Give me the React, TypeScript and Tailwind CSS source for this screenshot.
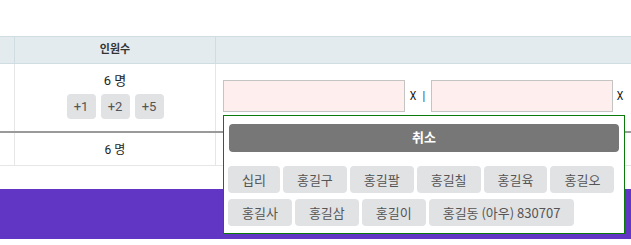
import React from "react";

const font = { fontFamily: 'Roboto, "Noto Sans CJK KR", sans-serif' };

const chips = ["십리", "홍길구", "홍길팔", "홍길칠", "홍길육", "홍길오", "홍길사", "홍길삼", "홍길이", "홍길동 (아우) 830707"];

export default function App() {
  return (
    <div className="relative w-[631px] h-[245px] overflow-hidden bg-white text-[#222]" style={font}>
      <div className="h-[36px]" />

      {/* header */}
      <div className="grid grid-cols-[15px_201px_1fr] h-[28px] bg-[#e3ebee] border-y border-[#cfdce1]">
        <div className="border-r border-[#cfdce1]" />
        <div className="border-r border-[#cfdce1] flex items-center justify-center text-[11px] font-bold text-[#333]">인원수</div>
        <div />
      </div>

      {/* row 1 */}
      <div className="grid grid-cols-[15px_201px_1fr] h-[67px]">
        <div className="border-r border-[#e6e6e6]" />
        <div className="border-r border-[#e6e6e6] flex flex-col items-center pt-[8px]">
          <div className="text-[13px] leading-[18px]">6 명</div>
          <div className="flex gap-[5px] mt-[4px]">
            {["+1", "+2", "+5"].map((b) => (
              <div key={b} className="w-[29px] h-[25px] rounded-[4px] bg-[#e1e2e4] flex items-center justify-center text-[13px] text-[#555]">{b}</div>
            ))}
          </div>
        </div>
        <div className="flex items-start pt-[16px] pl-[7px] text-[13px]">
          <div className="w-[182px] h-[32px] bg-[#feeeee] border border-[#c4c4c4]" />
          <span className="ml-[4px] leading-[32px] text-[#111] scale-x-[0.8]">X</span>
          <span className="ml-[5px] leading-[32px] text-[#3a5a9a]">|</span>
          <div className="ml-[6px] w-[182px] h-[32px] bg-[#feeeee] border border-[#c4c4c4]" />
          <span className="ml-[3px] leading-[32px] text-[#111] scale-x-[0.8]">X</span>
        </div>
      </div>

      <div className="h-[2px] bg-[#9a9a9a]" />

      {/* row 2 */}
      <div className="grid grid-cols-[15px_201px_1fr] h-[33px] border-b border-[#e6e6e6]">
        <div className="border-r border-[#e6e6e6]" />
        <div className="border-r border-[#e6e6e6] flex items-center justify-center text-[12px] pt-[2px]">6 명</div>
        <div />
      </div>

      <div className="h-[23px]" />
      <div className="h-[50px] bg-[#6236c5] flex justify-end items-center text-white text-[14px]">
        <span className="mr-[-5px]">[</span>
      </div>

      {/* dropdown */}
      <div className="absolute left-[223px] top-[115px] w-[402px] h-[119px] bg-white border border-[#0a7a0a] px-[4px] pt-[8px]">
        <div className="mx-[1px] h-[28px] rounded-[4px] bg-[#777777] flex items-center justify-center text-white font-bold text-[13px]">취소</div>
        <div className="flex flex-wrap gap-x-[3px] gap-y-[6px] mt-[14px]">
          {chips.map((c) => (
            <div key={c} className="h-[27px] rounded-[4px] bg-[#e1e2e4] px-[14px] flex items-center text-[13px] text-[#555]" style={{ fontFamily: '"Noto Sans CJK KR", sans-serif' }}>{c}</div>
          ))}
        </div>
      </div>
    </div>
  );
}
